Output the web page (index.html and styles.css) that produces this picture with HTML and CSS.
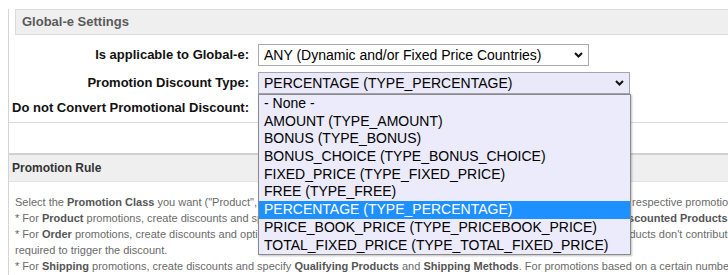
FILE: index.html
```html
<!DOCTYPE html>
<html>
<head>
<meta charset="utf-8">
<link rel="stylesheet" href="styles.css">
</head>
<body>
<div class="page">
  <div class="sec-head">Global-e Settings</div>
  <div class="form">
    <div class="label">Is applicable to Global-e:</div>
    <div class="field">
      <div class="select sel-a">
        <span>ANY (Dynamic and/or Fixed Price Countries)</span>
        <svg class="chev" width="9" height="6" viewBox="0 0 9 6"><path d="M1 1 L4.5 4.5 L8 1" fill="none" stroke="#111" stroke-width="2"/></svg>
      </div>
    </div>
    <div class="label">Promotion Discount Type:</div>
    <div class="field">
      <div class="dd-wrap">
        <div class="select sel-b">
          <span>PERCENTAGE (TYPE_PERCENTAGE)</span>
          <svg class="chev" width="9" height="6" viewBox="0 0 9 6"><path d="M1 1 L4.5 4.5 L8 1" fill="none" stroke="#111" stroke-width="2"/></svg>
        </div>
        <ul class="dropdown">
          <li>- None -</li>
          <li>AMOUNT (TYPE_AMOUNT)</li>
          <li>BONUS (TYPE_BONUS)</li>
          <li>BONUS_CHOICE (TYPE_BONUS_CHOICE)</li>
          <li>FIXED_PRICE (TYPE_FIXED_PRICE)</li>
          <li>FREE (TYPE_FREE)</li>
          <li class="active">PERCENTAGE (TYPE_PERCENTAGE)</li>
          <li>PRICE_BOOK_PRICE (TYPE_PRICEBOOK_PRICE)</li>
          <li>TOTAL_FIXED_PRICE (TYPE_TOTAL_FIXED_PRICE)</li>
        </ul>
      </div>
    </div>
    <div class="label">Do not Convert Promotional Discount:</div>
    <div class="field"></div>
  </div>
  <div class="divider"></div>
  <div class="rule-head">Promotion Rule</div>
  <div class="rule-body">
    <div class="line">Select the <b>Promotion Class</b> you want ("Product", "Order" or "Shipping") from the dropdown list above and then first create the respective promotion rule.</div>
    <div class="line">* For <b>Product</b> promotions, create discounts and specify the <b>Qualifying Products</b> (with their quantities), and, optionally, the <b>Discounted Products</b>, if any.</div>
    <div class="line">* For <b>Order</b> promotions, create discounts and optionally specify all <b>Qualifying Products</b> and excluded products. Excluded products don't contribute to the order total</div>
    <div class="line">required to trigger the discount.</div>
    <div class="line">* For <b>Shipping</b> promotions, create discounts and specify <b>Qualifying Products</b> and <b>Shipping Methods</b>. For promotions based on a certain number of items.</div>
  </div>
</div>
</body>
</html>
```
FILE: styles.css
```css
html, body {
  margin: 0;
  padding: 0;
  overflow: hidden;
  background: #fff;
  font-family: "Liberation Sans", Arial, sans-serif;
}
.page {
  margin-left: 8px;
  border-left: 1px solid #d4d4d4;
  min-height: 275px;
  width: 900px;
}
.sec-head {
  margin: 9px 0 0 6px;
  height: 24px;
  line-height: 24px;
  border: 1px solid #dcdcdc;
  background: #efefef;
  padding-left: 6px;
  font-size: 13px;
  font-weight: bold;
  color: #5a5a5a;
}
.form {
  display: grid;
  grid-template-columns: 240px auto;
  column-gap: 9px;
  row-gap: 6px;
  margin-top: 9px;
  align-items: center;
}
.label {
  text-align: right;
  font-size: 13px;
  font-weight: bold;
  color: #111;
  line-height: 16px;
}
.field {
  min-height: 16px;
}
.select {
  box-sizing: border-box;
  height: 22px;
  border: 1px solid #a9a9a9;
  display: flex;
  align-items: center;
  justify-content: space-between;
  padding: 0 5px 0 5px;
  font-size: 14px;
  color: #000;
  background: #fff;
}
.sel-a { width: 331px; }
.sel-b {
  width: 372px;
  background: #e9e9f9;
  border-color: #a4a4b0;
}
.chev { display: block; }
.dd-wrap {
  position: relative;
  width: 372px;
}
.dropdown {
  position: absolute;
  top: 100%;
  left: 0;
  margin: 0;
  padding: 0;
  list-style: none;
  width: 373px;
  box-sizing: border-box;
  border: 1px solid #8a8a8a;
  background: #ebebfb;
  box-shadow: 1px 1px 2px rgba(0,0,0,0.25);
  z-index: 5;
}
.dropdown li {
  height: 17.7px;
  line-height: 17.7px;
  padding-left: 5px;
  font-size: 14px;
  color: #000;
  white-space: nowrap;
}
.dropdown li.active {
  background: #1e90ff;
  color: #fff;
}
.divider {
  margin-top: 6px;
  height: 1px;
  background: #dcdcdc;
}
.rule-head {
  margin-top: 30px;
  border-top: 2px solid #d0d0d0;
  border-bottom: 1px solid #e2e2e2;
  background: #efefef;
  height: 26px;
  line-height: 26px;
  padding-left: 3px;
  font-size: 12px;
  font-weight: bold;
  color: #333;
}
.rule-body {
  padding: 12px 0 0 6px;
}
.line {
  white-space: nowrap;
  font-size: 11px;
  line-height: 16px;
  color: #6a6a6a;
}
.line b {
  color: #555;
}
```
